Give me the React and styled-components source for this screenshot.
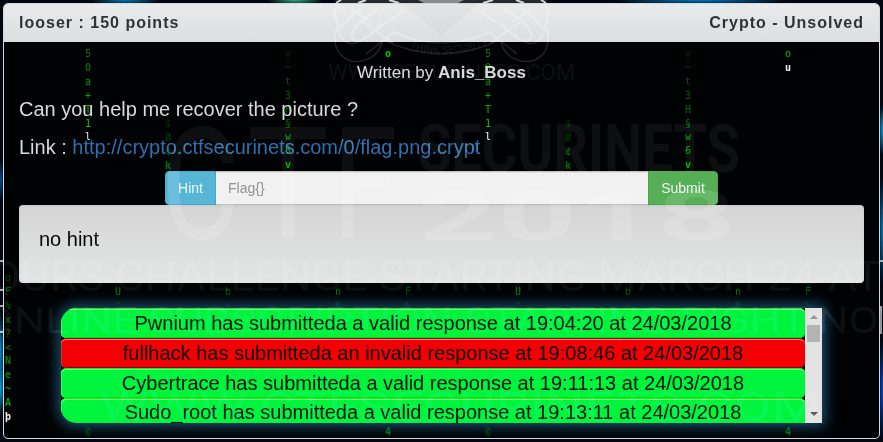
import React from "react";
import styled, { createGlobalStyle, css } from "styled-components";

const GlobalStyle = createGlobalStyle`
  * { box-sizing: border-box; }
  body { margin: 0; overflow: hidden; background: #020611; font-family: "Liberation Sans", Arial, sans-serif; }
`;

const Page = styled.main`
  position: relative;
  width: 883px;
  height: 442px;
  padding: 3px;
  overflow: hidden;
  background:
    radial-gradient(ellipse 5px 42px at 0 352px, #078fd0, transparent),
    radial-gradient(ellipse 5px 28px at 0 388px, #12a7e8, transparent),
    radial-gradient(ellipse 5px 22px at 0 180px, #064c88, transparent),
    radial-gradient(ellipse 5px 26px at 883px 130px, #129ad9, transparent),
    radial-gradient(ellipse 5px 55px at 883px 230px, #087abb, transparent),
    radial-gradient(ellipse 5px 50px at 883px 390px, #064bd0, transparent),
    radial-gradient(ellipse 35px 6px at 125px 0, #0874ad, transparent),
    radial-gradient(ellipse 28px 6px at 295px 0, #2da579, transparent),
    radial-gradient(ellipse 90px 6px at 700px 0, #0872ba, transparent),
    #020711;
`;

const Layer = styled.svg`
  position: absolute;
  inset: 0;
  pointer-events: none;
`;

const PosterLayer = styled(Layer)`
  z-index: 2;
`;

const SheenLayer = styled(Layer)`
  z-index: 3;
  mix-blend-mode: soft-light;
`;

const Panel = styled.section`
  height: 436px;
  border: 1px solid #d8d8d8;
  border-radius: 5px;
  background: #010203;
  overflow: hidden;
`;

const Header = styled.header`
  display: flex;
  justify-content: space-between;
  height: 38px;
  padding: 0 15px;
  line-height: 37px;
  color: #303236;
  font-size: 16px;
  font-weight: bold;
  letter-spacing: 1px;
  background: linear-gradient(#e8eaec, #dcdddf);
`;

const Body = styled.div`
  position: relative;
  z-index: 1;
  display: flex;
  flex-direction: column;
  padding: 20px 15px 0;
  color: #d9d9d9;
`;

const Author = styled.p`
  margin: 0 0 11px;
  text-align: center;
  font-size: 17px;
  line-height: 22px;
`;

const Paragraph = styled.p`
  margin: 0 0 10px;
  font-size: 20px;
  line-height: 28px;
`;

const Link = styled.a`
  color: #2f70ae;
  text-decoration: none;
`;

const AnswerForm = styled.form`
  display: flex;
  align-self: center;
  width: 553px;
  height: 34px;
`;

const Button = styled.button`
  width: ${({ $width }) => $width}px;
  padding: 0;
  border: 1px solid ${({ $border }) => $border};
  border-radius: ${({ $end }) => ($end ? "0 4px 4px 0" : "4px 0 0 4px")};
  background: ${({ $color }) => $color};
  color: #eef7f5;
  font: 14px "Liberation Sans", Arial, sans-serif;
`;

const FlagInput = styled.input`
  flex: 1;
  min-width: 0;
  height: 34px;
  padding: 6px 12px;
  border: 1px solid #bcbcbc;
  border-width: 1px 0;
  border-radius: 0;
  outline: 0;
  background: #f1f1f1;
  box-shadow: inset 0 1px 1px #00000010;
  color: #555;
  font: 14px "Liberation Sans", Arial, sans-serif;
  &::placeholder { color: #929292; opacity: 1; }
`;

const Hint = styled.div`
  height: 78px;
  padding: 20px;
  border-radius: 4px;
  color: #080808;
  font-size: 20px;
  line-height: 28px;
  background: linear-gradient(#d5d5d5, #e3e4e4);
  box-shadow: inset 0 1px 3px #00000010;
`;

const Activity = styled.div`
  display: flex;
  width: 761px;
  height: 115px;
  margin: 25px 0 0 42px;
  border-radius: 15px 0 0 15px;
  box-shadow: 0 0 14px 3px #1d5674;
  background: #000;
  overflow: hidden;
`;

const Entries = styled.ul`
  flex: 1;
  height: 115px;
  margin: 0;
  padding: 0;
  overflow: hidden;
  list-style: none;
`;

const Entry = styled.li`
  height: 30px;
  border-top: 1px solid;
  border-radius: 5px;
  color: #071009;
  font-size: 20px;
  line-height: 29px;
  text-align: center;
  &:last-child { line-height: 27px; }
  ${({ $invalid }) => $invalid ? css`
    border-color: #8d0000;
    background: #f40004;
    box-shadow: inset 0 1px #ff9291, inset 1px 0 #c93535, inset 0 -1px #850000;
  ` : css`
    border-color: #00fb05;
    background: #00f43d;
    box-shadow: inset 0 1px #96ff9c, inset 1px 0 #37ff58, inset 0 -1px #00e900;
  `}
`;

const Scrollbar = styled.div`
  display: flex;
  flex-direction: column;
  align-items: center;
  justify-content: space-between;
  width: 17px;
  height: 115px;
  padding: 7px 0;
  background: #e3e3e4;
`;

const Arrow = styled.i`
  width: 0;
  height: 0;
  border: solid transparent;
  border-width: ${({ $down }) => ($down ? "4px 4px 0" : "0 4px 4px")};
  ${({ $down }) => ($down ? "border-top-color: #484848" : "border-bottom-color: #999")};
`;

const Thumb = styled.div`
  width: 13px;
  height: 17px;
  margin: 6px 0 auto;
  background: #b4b4b4;
`;

const rain = [
  [88, 57, "50a+T1l", .55, 1, true], [488, 57, "50a+T1l", .55, 1, true],
  [288, 57, "v~t3H§w6v", .2, .75], [688, 57, "v~t3H§w6v", .2, .75],
  [388, 57, "o", .9, .9], [788, 57, "ou", .9, 1, true],
  [168, 127, "$Ø¢k", .2, .5], [568, 127, "$Ø¢k", .2, .5],
  [8, 281, "qF%x?<Ne~Aþ", .3, 1, true],
  [118, 295, "U^", .6, .2], [518, 295, "U^", .6, .2],
  [228, 295, "b-", .4, .2], [628, 295, "b-", .4, .2],
  [338, 295, "nB", .55, .2], [738, 295, "nB", .55, .2],
  [408, 295, "F%", .35, .2], [808, 295, "F%", .35, .2],
  [88, 434, "@", .3, .3], [488, 434, "@", .3, .3],
  [388, 435, "4", .6, .6], [788, 435, "4", .6, .6],
];

const posterWords = [
  { text: "WWW.SECURINETS.COM", x: 328, y: 80, size: 22, width: 247 },
  { text: "C", x: 161, y: 238, size: 156, width: 78 },
  { text: "T", x: 247, y: 238, size: 156, width: 82 },
  { text: "F", x: 332, y: 238, size: 156, width: 66 },
  { text: "SECURINETS", x: 418, y: 172, size: 67, width: 322, bold: true },
  { text: "2018", x: 418, y: 240, size: 70, width: 318, bold: true },
  { text: "OURS CHALLENGE STARTING MARCH 24 AT", x: -10, y: 291, size: 43, width: 891 },
  { text: "ONLINE SUBSCRIPTION STARTING RIGHT NOW", x: -17, y: 333, size: 37, width: 935 },
  { text: "WWW.CTFSECURINETS.COM", x: 100, y: 421, size: 40, width: 720 },
];

const entries = [
  { text: "Pwnium has submitteda a valid response at 19:04:20 at 24/03/2018" },
  { text: "fullhack has submitteda an invalid response at 19:08:46 at 24/03/2018", invalid: true },
  { text: "Cybertrace has submitteda a valid response at 19:11:13 at 24/03/2018" },
  { text: "Sudo_root has submitteda a valid response at 19:13:11 at 24/03/2018" },
];

function DigitalRain() {
  return (
    <Layer width="883" height="442" aria-hidden="true">
      <g fontFamily="DejaVu Sans Mono, monospace" fontSize="10" textAnchor="middle">
        {rain.flatMap(([x, y, chars, from, to, head], column) => [...chars].map((char, i, all) => {
          const last = i === all.length - 1;
          return <text key={`${column}-${i}`} x={x} y={y + i * 13.9}
            fill={head && last ? "#eee" : "#00d80b"}
            fontWeight={last && all.length !== 7 ? "bold" : "normal"}
            opacity={from + (to - from) * (all.length === 1 ? 1 : i / (all.length - 1))}>{char}</text>;
        }))}
      </g>
    </Layer>
  );
}

function Poster() {
  return (
    <>
      <PosterLayer width="883" height="442" aria-hidden="true">
        <g opacity=".026">
          <g id="lettering" fill="#fff" fontFamily="Roboto, sans-serif">
            {posterWords.map(({ text, x, y, size, width, bold }) => (
              <text key={text} x={x} y={y} fontSize={size} textLength={width}
                fontWeight={bold ? "bold" : "normal"} lengthAdjust="spacingAndGlyphs">{text}</text>
            ))}
          </g>
        </g>
        <g fill="none" stroke="#fff" opacity=".055" strokeWidth="1.3">
          <path id="crest" d="M338 3Q332 15 338 25 331 39 339 53 352 68 372 57 380 51 382 42M338 31Q348 16 362 9M355 27Q367 16 378 9M339 33q8 16 21 8l45-31M355 27q-8 14 4 14 12-3 22-18M366 54l28-22Q416 43 441 43M384 40Q409 53 441 54M352 10l19 12M363 22l30 21" />
          <use href="#crest" transform="translate(883 0) scale(-1 1)" />
        </g>
        <path d="M403 3h76l-38 33z" fill="#777" opacity=".05" />
        <path id="ribbon" d="M410 48q31 12 82-4" fill="none" />
        <text fill="#fff" opacity=".08" fontFamily="Roboto, sans-serif" fontSize="10">
          <textPath href="#ribbon" textLength="80">THINK SECURITY</textPath>
        </text>
        <path d="M333 0h215l-8 3H341z" fill="#252a31" />
        <path d="M418 0h46l-6 3h-34z" fill="#8c8c8e" />
        <path d="M341 0l-5 3M366 0l-8 3M389 0l10 3M493 0l-10 3M516 0l8 3M541 0l5 3" fill="none" stroke="#d3d6d8" strokeWidth="2" />
        <path d="M0 261h4M0 290h4M0 306h4M0 332h4M880 261h3M881 306v28" stroke="#ddd" strokeWidth="1.3" />
      </PosterLayer>
      <SheenLayer width="883" height="442" aria-hidden="true">
        <use href="#lettering" opacity=".24" />
        <g fill="none" stroke="#fff" strokeWidth="2" opacity=".55">
          <use href="#crest" />
          <use href="#crest" transform="translate(883 0) scale(-1 1)" />
        </g>
      </SheenLayer>
    </>
  );
}

export default function App() {
  return (
    <>
      <GlobalStyle />
      <Page>
        <Panel>
          <Header><span>looser : 150 points</span><span>Crypto - Unsolved</span></Header>
          <DigitalRain />
          <Body>
            <Author>Written by <strong>Anis_Boss</strong></Author>
            <Paragraph>Can you help me recover the picture ?</Paragraph>
            <Paragraph>Link : <Link href="#challenge">http://crypto.ctfsecurinets.com/0/flag.png.crypt</Link></Paragraph>
            <AnswerForm onSubmit={(event) => event.preventDefault()}>
              <Button type="button" $width={51} $color="#57b5d5" $border="#45a8c7">Hint</Button>
              <FlagInput placeholder="Flag{}" aria-label="Flag" />
              <Button type="submit" $end $width={70} $color="#56ae57" $border="#4da34d">Submit</Button>
            </AnswerForm>
            <Hint>no hint</Hint>
            <Activity>
              <Entries>
                {entries.map(({ text, invalid }) => <Entry key={text} $invalid={invalid}>{text}</Entry>)}
              </Entries>
              <Scrollbar><Arrow /><Thumb /><Arrow $down /></Scrollbar>
            </Activity>
          </Body>
        </Panel>
        <Poster />
      </Page>
    </>
  );
}
